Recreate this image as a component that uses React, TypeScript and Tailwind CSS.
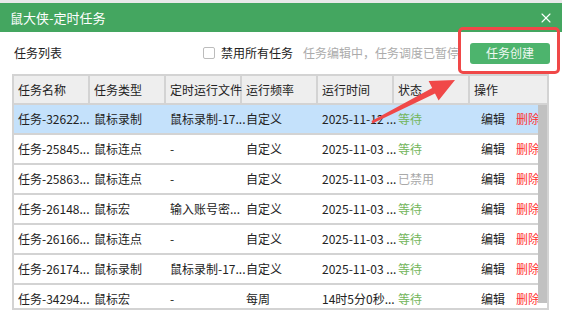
import { X } from "lucide-react";

const COLS = ["任务名称", "任务类型", "定时运行文件", "运行频率", "运行时间", "状态", "操作"];

const ROWS = [
  { name: "任务-32622...", type: "鼠标录制", file: "鼠标录制-17...", freq: "自定义", time: "2025-11-12 ...", status: "等待" },
  { name: "任务-25845...", type: "鼠标连点", file: "-", freq: "自定义", time: "2025-11-03 ...", status: "等待" },
  { name: "任务-25863...", type: "鼠标连点", file: "-", freq: "自定义", time: "2025-11-03 ...", status: "已禁用" },
  { name: "任务-26148...", type: "鼠标宏", file: "输入账号密...", freq: "自定义", time: "2025-11-03 ...", status: "等待" },
  { name: "任务-26166...", type: "鼠标连点", file: "-", freq: "自定义", time: "2025-11-03 ...", status: "等待" },
  { name: "任务-26174...", type: "鼠标录制", file: "鼠标录制-17...", freq: "自定义", time: "2025-11-03 ...", status: "等待" },
  { name: "任务-34294...", type: "鼠标宏", file: "-", freq: "每周", time: "14时5分0秒...", status: "等待" },
];

export default function App() {
  return (
    <div className="relative w-[562px] h-[320px] overflow-hidden bg-white text-[12px] text-[#222] font-['Noto_Sans_CJK_SC','Noto_Sans',sans-serif]">
      {/* window behind */}
      <div className="h-[3px] bg-[#e9e9e9]" />

      {/* title bar */}
      <div className="h-[29px] bg-[#44a660] flex items-center justify-between pl-[10px] pr-[8px] text-white">
        <span className="text-[13px] leading-none">鼠大侠-定时任务</span>
        <X size={16} strokeWidth={1.6} />
      </div>

      {/* toolbar */}
      <div className="h-[42px] flex items-center pl-[14px] pr-[12px]">
        <span>任务列表</span>
        <div className="ml-auto flex items-center">
          <span className="w-[12px] h-[12px] border border-[#bcbcbc] rounded-[2px] bg-white" />
          <span className="ml-[6px]">禁用所有任务</span>
          <span className="ml-[10px] text-[#ababab]">任务编辑中，任务调度已暂停</span>
          <button className="ml-[11px] w-[80px] h-[21px] rounded-[3px] bg-[#4db46d] text-[#eef8f1] text-[12px] leading-none">
            任务创建
          </button>
        </div>
      </div>

      {/* table */}
      <div className="ml-[12px] w-[537px] h-[236px] border-2 border-[#d3d3d3] flex flex-col overflow-hidden">
        <div className="h-[29px] shrink-0 flex bg-[#eeeeee] border-b-2 border-[#d3d3d3]">
          {COLS.map((c, i) => (
            <div
              key={c}
              className={`flex items-center pl-[4px] whitespace-nowrap ${i < 6 ? "w-[76px] shrink-0 border-r-2 border-[#d3d3d3]" : "flex-1"}`}
            >
              {c}
            </div>
          ))}
        </div>
        <div className="flex flex-1 min-h-0">
          <div className="w-[524px] overflow-hidden">
            <div className="w-[535px]">
              {ROWS.map((r, i) => (
                <div
                  key={r.name}
                  className={`h-[30px] flex border-b-2 border-[#d3d3d3] ${i === 0 ? "bg-[#c4e1fb]" : "bg-white"}`}
                >
                  <div className="w-[76px] pl-[4px] flex items-center whitespace-nowrap">{r.name}</div>
                  <div className="w-[76px] pl-[4px] flex items-center whitespace-nowrap">{r.type}</div>
                  <div className="w-[76px] pl-[4px] flex items-center whitespace-nowrap">{r.file}</div>
                  <div className="w-[76px] pl-[4px] flex items-center whitespace-nowrap">{r.freq}</div>
                  <div className="w-[76px] pl-[4px] flex items-center whitespace-nowrap">{r.time}</div>
                  <div
                    className={`w-[76px] pl-[4px] flex items-center whitespace-nowrap ${
                      r.status === "等待" ? "text-[#72b55a]" : "text-[#a9a9a9]"
                    }`}
                  >
                    {r.status}
                  </div>
                  <div className="flex-1 pl-[11px] flex items-center gap-[11px] whitespace-nowrap">
                    <span>编辑</span>
                    <span className="text-[#ff2f2f]">删除</span>
                  </div>
                </div>
              ))}
            </div>
          </div>
          <div className="w-[9px] bg-white">
            <div className="h-[198px] bg-[#c1c1c1]" />
          </div>
        </div>
      </div>

      {/* annotation: red frame + arrow */}
      <div className="absolute left-[458px] top-[27px] w-[102px] h-[47px] border-[3px] border-[#f04848] rounded-[5px]" />
      <svg className="absolute inset-0 pointer-events-none" width="562" height="320" viewBox="0 0 562 320">
        <polygon
          fill="#f04848"
          points="371.5,121 432.2,88.1 428.6,81 455,80 438.6,100.6 435,93.5 372.5,123.5"
        />
      </svg>
    </div>
  );
}
